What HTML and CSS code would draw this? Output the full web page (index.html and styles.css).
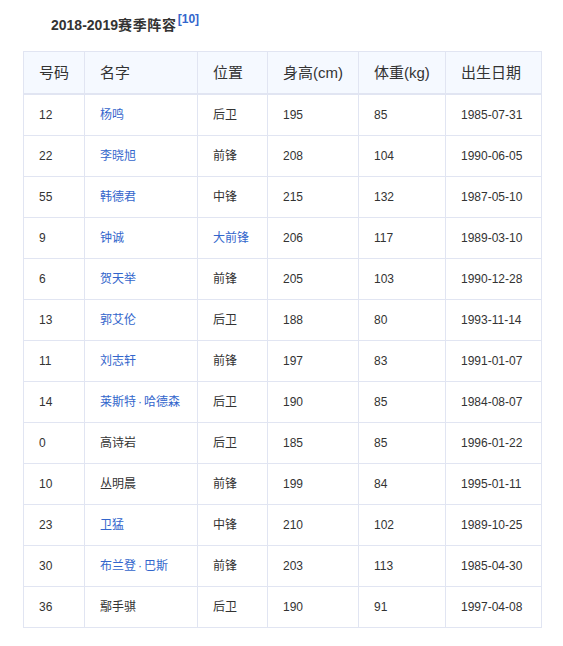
FILE: index.html
```html
<!DOCTYPE html>
<html lang="zh">
<head>
<meta charset="utf-8">
<title>2018-2019赛季阵容</title>
<link rel="stylesheet" href="styles.css">
</head>
<body>
<div class="page">
  <h3 class="title">2018-2019<span class="cjk">赛季阵容</span><sup class="ref">[10]</sup></h3>
  <table class="roster">
    <colgroup>
      <col class="c1"><col class="c2"><col class="c3"><col class="c4"><col class="c5"><col class="c6">
    </colgroup>
    <thead>
      <tr><th>号码</th><th>名字</th><th>位置</th><th>身高(cm)</th><th>体重(kg)</th><th>出生日期</th></tr>
    </thead>
    <tbody>
      <tr><td>12</td><td><a class="link">杨鸣</a></td><td>后卫</td><td>195</td><td>85</td><td>1985-07-31</td></tr>
      <tr><td>22</td><td><a class="link">李晓旭</a></td><td>前锋</td><td>208</td><td>104</td><td>1990-06-05</td></tr>
      <tr><td>55</td><td><a class="link">韩德君</a></td><td>中锋</td><td>215</td><td>132</td><td>1987-05-10</td></tr>
      <tr><td>9</td><td><a class="link">钟诚</a></td><td><a class="link">大前锋</a></td><td>206</td><td>117</td><td>1989-03-10</td></tr>
      <tr><td>6</td><td><a class="link">贺天举</a></td><td>前锋</td><td>205</td><td>103</td><td>1990-12-28</td></tr>
      <tr><td>13</td><td><a class="link">郭艾伦</a></td><td>后卫</td><td>188</td><td>80</td><td>1993-11-14</td></tr>
      <tr><td>11</td><td><a class="link">刘志轩</a></td><td>前锋</td><td>197</td><td>83</td><td>1991-01-07</td></tr>
      <tr><td>14</td><td><a class="link">莱斯特<span class="dot">·</span>哈德森</a></td><td>后卫</td><td>190</td><td>85</td><td>1984-08-07</td></tr>
      <tr><td>0</td><td>高诗岩</td><td>后卫</td><td>185</td><td>85</td><td>1996-01-22</td></tr>
      <tr><td>10</td><td>丛明晨</td><td>前锋</td><td>199</td><td>84</td><td>1995-01-11</td></tr>
      <tr><td>23</td><td><a class="link">卫猛</a></td><td>中锋</td><td>210</td><td>102</td><td>1989-10-25</td></tr>
      <tr><td>30</td><td><a class="link">布兰登<span class="dot">·</span>巴斯</a></td><td>前锋</td><td>203</td><td>113</td><td>1985-04-30</td></tr>
      <tr><td>36</td><td>鄢手骐</td><td>后卫</td><td>190</td><td>91</td><td>1997-04-08</td></tr>
    </tbody>
  </table>
</div>
</body>
</html>
```
FILE: styles.css
```css
html, body {
  margin: 0;
  padding: 0;
  background: #fff;
}
body {
  font-family: "Liberation Sans", "Noto Sans CJK SC", sans-serif;
  color: #333;
}
.page {
  padding: 15px 0 0 23px;
}
.title {
  margin: 0 0 16px 28px;
  font-size: 14px;
  line-height: 20px;
  font-weight: bold;
  color: #333;
}
.title .cjk {
  letter-spacing: 0.7px;
}
.ref {
  font-size: 12px;
  line-height: 0;
  color: #3366cc;
  font-weight: bold;
  vertical-align: 7px;
  margin-left: 1px;
}
.roster {
  border-collapse: collapse;
  table-layout: fixed;
  width: 518px;
}
.c1 { width: 61px; }
.c2 { width: 113px; }
.c3 { width: 70px; }
.c4 { width: 91px; }
.c5 { width: 87px; }
.c6 { width: 96px; }
.roster th,
.roster td {
  border: 1px solid #e1e5f2;
  padding: 0 0 0 15px;
  text-align: left;
  white-space: nowrap;
}
.roster th {
  background: #f5f9ff;
  font-weight: normal;
  font-size: 15px;
  line-height: 41px;
  color: #333;
  border-bottom: 2px solid #e1e5f2;
}
.roster td {
  font-size: 12px;
  line-height: 40px;
  color: #333;
}
.link {
  color: #3366cc;
  text-decoration: none;
}
.dot {
  padding: 0 2px;
}
```
